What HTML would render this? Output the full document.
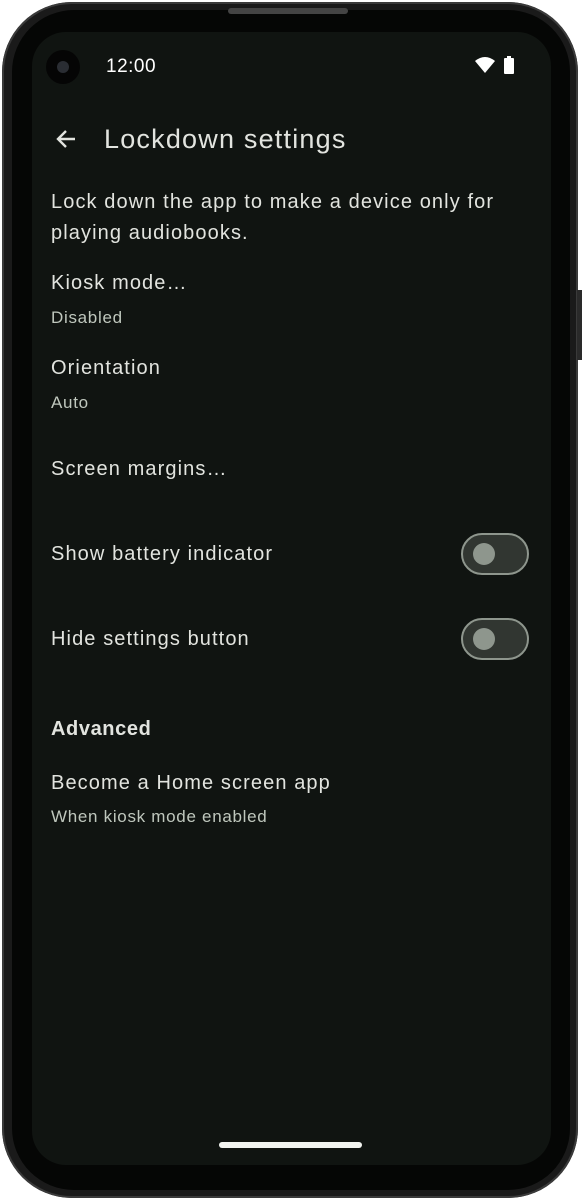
<!DOCTYPE html>
<html><head><meta charset="utf-8"><style>
body{margin:0;width:582px;height:1200px;background:#fff;overflow:hidden;font-family:"Liberation Sans",sans-serif;position:relative}
.frame{position:absolute;left:2px;top:2px;width:576px;height:1196px;border-radius:70px;background:#1a1a1a;box-shadow:inset 0 0 0 2px #3a3a3a}
.inner{position:absolute;left:12px;top:10px;width:558px;height:1180px;border-radius:62px;background:#050605}
.screen{position:absolute;left:32px;top:32px;width:519px;height:1133px;border-radius:34px;background:#101411}
.t{position:absolute;white-space:nowrap;color:#e2e4df;font-size:20px;letter-spacing:1.1px}
.s{font-size:17px;color:#bfc7bd;letter-spacing:0.7px}
.tog{position:absolute;left:461px;width:64px;height:38px;border:2px solid #8e968d;border-radius:22px;background:#313631}
.tog:after{content:"";position:absolute;left:10px;top:8px;width:22px;height:22px;border-radius:50%;background:#8e968d}
</style></head><body>
<div class="frame"></div>
<div class="inner"></div>
<div style="position:absolute;left:228px;top:8px;width:120px;height:6px;background:#444;border-radius:3px"></div>
<div style="position:absolute;left:577px;top:290px;width:5px;height:70px;background:#2a2a2a"></div>
<div class="screen"></div>
<div style="position:absolute;left:46px;top:50px;width:34px;height:34px;border-radius:50%;background:#050505"></div>
<div style="position:absolute;left:57px;top:61px;width:12px;height:12px;border-radius:50%;background:#2a2d33"></div>
<div class="t" style="left:106px;top:56px;font-size:19px;color:#fff;letter-spacing:0.5px">12:00</div>
<svg style="position:absolute;left:475px;top:56px" width="20" height="18" viewBox="0 0 20 18"><path d="M0 5 Q10 -3 20 5 L10 17 Z" fill="#fff"/></svg>
<div style="position:absolute;left:504px;top:58px;width:10px;height:16px;background:#fff;border-radius:1px"></div>
<div style="position:absolute;left:507px;top:56px;width:4px;height:2px;background:#fff"></div>
<svg style="position:absolute;left:54px;top:127px" width="24" height="24" viewBox="0 0 24 24"><path d="M21 12H4M12 4l-8 8 8 8" stroke="#e2e4df" stroke-width="2.4" fill="none"/></svg>
<div class="t" style="left:104px;top:124px;font-size:27px;letter-spacing:1.2px">Lockdown settings</div>
<div class="t" style="left:51px;top:187px;line-height:31px">Lock down the app to make a device only for<br>playing audiobooks.</div>
<div class="t" style="left:51px;top:272px">Kiosk mode…</div>
<div class="t s" style="left:51px;top:308px">Disabled</div>
<div class="t" style="left:51px;top:357px">Orientation</div>
<div class="t s" style="left:51px;top:393px">Auto</div>
<div class="t" style="left:51px;top:458px">Screen margins…</div>
<div class="t" style="left:51px;top:543px">Show battery indicator</div>
<div class="tog" style="top:533px"></div>
<div class="t" style="left:51px;top:628px">Hide settings button</div>
<div class="tog" style="top:618px"></div>
<div class="t" style="left:51px;top:718px;font-weight:bold;letter-spacing:0.6px">Advanced</div>
<div class="t" style="left:51px;top:772px">Become a Home screen app</div>
<div class="t s" style="left:51px;top:807px">When kiosk mode enabled</div>
<div style="position:absolute;left:219px;top:1142px;width:143px;height:6px;border-radius:3px;background:#f2f4f0"></div>
</body></html>
